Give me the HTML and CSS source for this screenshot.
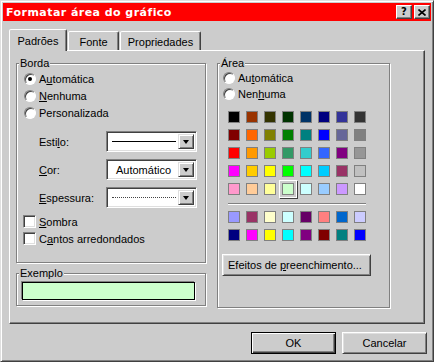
FILE: index.html
```html
<!DOCTYPE html>
<html lang="pt">
<head>
    <meta charset="UTF-8">
    <title>Formatar área do gráfico</title>
    <link rel="stylesheet" href="styles.css">
</head>
<body>
    <div class="dialog">
        <div class="titlebar">
            <span class="title">Formatar área do gráfico</span>
            <div class="title-btns">
                <span class="tbtn help">?</span>
                <span class="tbtn">
                    <svg width="8" height="7" viewBox="0 0 8 7"><path d="M0.5 0.5 L7.5 6.5 M7.5 0.5 L0.5 6.5" stroke="#000" stroke-width="1.6" fill="none"/></svg>
                </span>
            </div>
        </div>

        <div class="tabs">
            <div class="tab active">Padrões</div>
            <div class="tab fonte">Fonte</div>
            <div class="tab props">Propriedades</div>
        </div>

        <div class="panel">
            <div class="col-left">
                <div class="group borda">
                    <span class="group-label">Borda</span>
                    <div class="radio"><span class="circle on"></span>A<u>u</u>tomática</div>
                    <div class="radio"><span class="circle"></span><u>N</u>enhuma</div>
                    <div class="radio"><span class="circle"></span>Personalizada</div>

                    <div class="field first">
                        <span class="flabel">Esti<u>l</u>o:</span>
                        <div class="combo">
                            <div class="combo-val"><span class="line solid"></span></div>
                            <span class="combo-btn"><span class="arrow"></span></span>
                        </div>
                    </div>
                    <div class="field">
                        <span class="flabel"><u>C</u>or:</span>
                        <div class="combo">
                            <div class="combo-val center">Automático</div>
                            <span class="combo-btn"><span class="arrow"></span></span>
                        </div>
                    </div>
                    <div class="field">
                        <span class="flabel"><u>E</u>spessura:</span>
                        <div class="combo">
                            <div class="combo-val"><span class="line dotted"></span></div>
                            <span class="combo-btn"><span class="arrow"></span></span>
                        </div>
                    </div>

                    <div class="check first"><span class="box"></span><u>S</u>ombra</div>
                    <div class="check"><span class="box"></span>C<u>a</u>ntos arredondados</div>
                </div>

                <div class="group exemplo">
                    <span class="group-label">Exemplo</span>
                    <div class="sample"></div>
                </div>
            </div>

            <div class="group area">
                <span class="group-label">Área</span>
                <div class="radio"><span class="circle"></span>Au<u>t</u>omática</div>
                <div class="radio"><span class="circle"></span>Nen<u>h</u>uma</div>

                <div class="palette" id="palette"></div>
                <div class="sep"></div>
                <div class="palette" id="chartPalette"></div>

                <button class="btn effects">Efeitos de <u>p</u>reenchimento...</button>
            </div>
        </div>

        <div class="actions">
            <button class="btn default">OK</button>
            <button class="btn">Cancelar</button>
        </div>
    </div>

    <script>
        // Excel 97 palette
        const colors = [
            '#000000', '#993300', '#333300', '#003300', '#003366', '#000080', '#333399', '#333333',
            '#800000', '#ff6600', '#808000', '#008000', '#008080', '#0000ff', '#666699', '#808080',
            '#ff0000', '#ff9900', '#99cc00', '#339966', '#33cccc', '#3366ff', '#800080', '#969696',
            '#ff00ff', '#ffcc00', '#ffff00', '#00ff00', '#00ffff', '#00ccff', '#993366', '#c0c0c0',
            '#ff99cc', '#ffcc99', '#ffff99', '#ccffcc', '#ccffff', '#99ccff', '#cc99ff', '#ffffff'
        ];
        const chartColors = [
            '#9999ff', '#993366', '#ffffcc', '#ccffff', '#660066', '#ff8080', '#0066cc', '#ccccff',
            '#000080', '#ff00ff', '#ffff00', '#00ffff', '#800080', '#800000', '#008080', '#0000ff'
        ];
        const selected = '#ccffcc';

        function fill(id, list) {
            const box = document.getElementById(id);
            list.forEach(c => {
                const s = document.createElement('span');
                s.className = 'swatch' + (c === selected ? ' sel' : '');
                s.style.background = c;
                box.appendChild(s);
            });
        }

        fill('palette', colors);
        fill('chartPalette', chartColors);
    </script>
</body>
</html>
```

FILE: styles.css
```css
* {
    box-sizing: border-box;
}

body {
    margin: 0;
    background: #cccccc;
    font-family: "Liberation Sans", Arial, sans-serif;
    font-size: 11px;
    color: #000;
}

u {
    text-decoration: underline;
    text-underline-offset: 1px;
}

.dialog {
    width: 434px;
    height: 362px;
    padding: 2px;
    background: #cccccc;
    border: 1px solid;
    border-color: #dfdfdf #404040 #404040 #dfdfdf;
    box-shadow: inset 1px 1px #fff, inset -1px -1px #808080;
}

/* title bar */
.titlebar {
    height: 18px;
    background: #ff0000;
    display: flex;
    align-items: center;
    justify-content: space-between;
    padding: 0 1px 0 3px;
}

.title {
    color: #fff;
    font-family: "DejaVu Sans", sans-serif;
    font-weight: bold;
    font-size: 11px;
    letter-spacing: 0.45px;
}

.title-btns {
    display: flex;
    gap: 2px;
}

.tbtn {
    width: 16px;
    height: 14px;
    background: #cccccc;
    border: 1px solid;
    border-color: #fff #404040 #404040 #fff;
    box-shadow: inset -1px -1px #808080;
    display: flex;
    align-items: center;
    justify-content: center;
}

.tbtn.help {
    font-family: "DejaVu Sans", sans-serif;
    font-weight: bold;
    font-size: 10px;
    line-height: 1;
}

/* tabs */
.tabs {
    display: flex;
    align-items: flex-end;
    height: 21px;
    margin: 8px 0 0 6px;
}

.tab {
    height: 19px;
    border: 1px solid;
    border-bottom: none;
    border-color: #fff #404040 transparent #fff;
    border-radius: 2px 2px 0 0;
    box-shadow: inset -1px 0 #808080;
    display: flex;
    align-items: center;
    justify-content: center;
    padding-top: 2px;
    background: #cccccc;
}

.tab.active {
    width: 58px;
    height: 22px;
    margin-bottom: -1px;
    margin-right: 1px;
    position: relative;
    z-index: 1;
    padding-top: 1px;
}

.tab.fonte {
    width: 51px;
    margin-right: 1px;
}

.tab.props {
    width: 81px;
}

/* tab page */
.panel {
    width: 416px;
    height: 274px;
    margin-left: 6px;
    border: 1px solid;
    border-color: #fff #404040 #404040 #fff;
    box-shadow: inset -1px -1px #808080;
    display: flex;
    align-items: flex-start;
    gap: 11px;
    padding: 12px 0 0 6px;
}

.col-left {
    display: flex;
    flex-direction: column;
    gap: 10px;
}

.group {
    border: 1px solid #808080;
    box-shadow: inset 1px 1px #fff, 1px 1px #fff;
}

.group-label {
    display: table;
    margin: -7px 0 0 2px;
    padding: 0 1px;
    line-height: 13px;
    background: #cccccc;
}

.borda {
    width: 190px;
    height: 200px;
}

.exemplo {
    width: 190px;
    height: 33px;
}

.area {
    width: 173px;
    height: 245px;
}

/* radios and checks */
.radio {
    display: flex;
    align-items: center;
    height: 17px;
    padding-left: 7px;
}

.area .radio {
    height: 16px;
    padding-left: 5px;
}

.circle {
    width: 12px;
    height: 12px;
    border-radius: 50%;
    background: #fff;
    border: 1px solid;
    border-color: #808080 #fff #fff #808080;
    box-shadow: inset 1px 1px #404040;
    margin-right: 3px;
    display: flex;
    align-items: center;
    justify-content: center;
}

.circle.on::after {
    content: "";
    width: 4px;
    height: 4px;
    border-radius: 50%;
    background: #000;
}

.check {
    display: flex;
    align-items: center;
    height: 17px;
    padding-left: 6px;
}

.check.first {
    margin-top: 5px;
}

.box {
    width: 13px;
    height: 13px;
    background: #fff;
    border: 1px solid;
    border-color: #808080 #fff #fff #808080;
    box-shadow: inset 1px 1px #404040, inset -1px -1px #dfdfdf;
    margin-right: 3px;
}

/* line style fields */
.field {
    display: flex;
    align-items: center;
    padding-left: 22px;
    margin-top: 7px;
}

.field.first {
    margin-top: 10px;
}

.flabel {
    width: 67px;
}

.combo {
    width: 91px;
    height: 21px;
    display: flex;
    background: #fff;
    border: 1px solid;
    border-color: #808080 #fff #fff #808080;
    box-shadow: inset 1px 1px #404040, inset -1px -1px #dfdfdf;
    padding: 2px 2px 2px 2px;
}

.combo-val {
    flex: 1;
    display: flex;
    align-items: center;
    padding-left: 3px;
}

.combo-val.center {
    justify-content: center;
    padding-left: 0;
}

.line {
    width: 64px;
}

.line.solid {
    border-top: 1px solid #000;
}

.line.dotted {
    border-top: 1px dotted #444;
}

.combo-btn {
    width: 16px;
    background: #cccccc;
    border: 1px solid;
    border-color: #dfdfdf #404040 #404040 #dfdfdf;
    box-shadow: inset 1px 1px #fff, inset -1px -1px #808080;
    display: flex;
    align-items: center;
    justify-content: center;
}

.arrow {
    width: 0;
    height: 0;
    border-left: 3.5px solid transparent;
    border-right: 3.5px solid transparent;
    border-top: 4px solid #000;
}

.sample {
    width: 173px;
    height: 18px;
    margin: 2px 0 0 5px;
    background: #ccffcc;
    border: 1px solid #000;
    box-shadow: -1px -1px #808080, 1px 1px #fff;
}

/* colour palette */
.palette {
    display: grid;
    grid-template-columns: repeat(8, 12px);
    gap: 6px;
    margin-left: 10px;
}

#palette {
    margin-top: 9px;
}

.swatch {
    width: 12px;
    height: 12px;
    border: 1px solid #808080;
}

.swatch.sel {
    box-shadow: 0 0 0 2px #cccccc, 0 0 0 3px #fff, 1px 1px 0 3px #404040;
}

.sep {
    width: 138px;
    height: 2px;
    margin: 8px 0 6px 10px;
    border-top: 1px solid #808080;
    border-bottom: 1px solid #fff;
}

/* buttons */
.btn {
    font-family: "Liberation Sans", Arial, sans-serif;
    font-size: 11px;
    color: #000;
    background: #cccccc;
    border: 1px solid;
    border-color: #fff #404040 #404040 #fff;
    box-shadow: inset 1px 1px #dfdfdf, inset -1px -1px #808080;
    padding: 0;
    height: 22px;
}

.btn.default {
    border: 1px solid #000;
    box-shadow: inset 1px 1px #fff, inset -1px -1px #404040, inset -2px -2px #808080;
}

.effects {
    width: 149px;
    margin: 13px 0 0 4px;
    text-align: left;
    padding-left: 5px;
}

.actions {
    display: flex;
    justify-content: flex-end;
    gap: 6px;
    margin-top: 8px;
    padding-right: 4px;
}

.actions .btn {
    width: 85px;
}
```
